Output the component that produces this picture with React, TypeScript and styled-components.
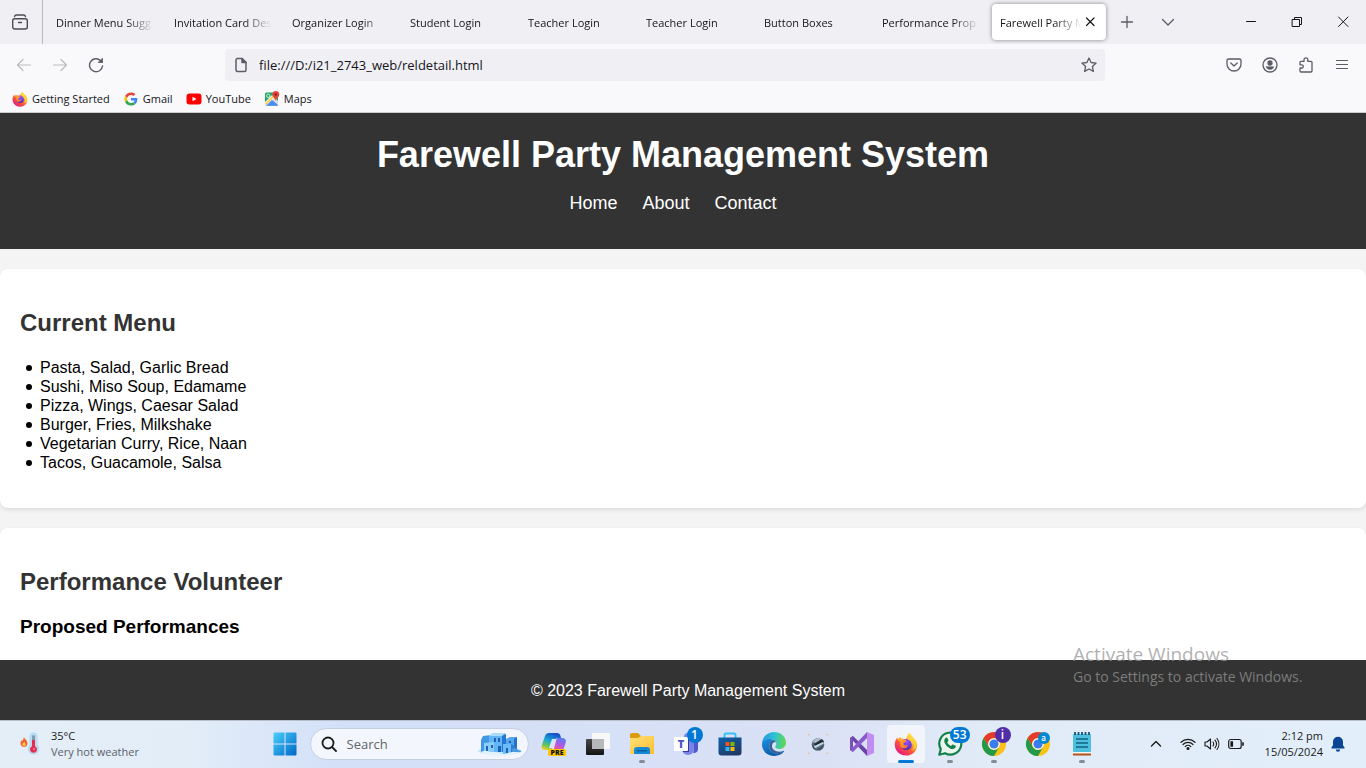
import React from "react";
import styled, { createGlobalStyle } from "styled-components";

const uiFont = `"Segoe UI", "Open Sans", "Noto Sans", sans-serif`;

const GlobalStyle = createGlobalStyle`
  *, *::before, *::after { box-sizing: border-box; }
  body { margin: 0; background: #f4f4f4; font-family: Arial, "Liberation Sans", sans-serif; }
  button, input { font: inherit; color: inherit; border: 0; padding: 0; margin: 0; background: none; }
  a { color: inherit; text-decoration: none; }
  svg { display: block; flex: none; }
`;

const Desktop = styled.div`
  position: relative;
  display: flex;
  flex-direction: column;
  height: 100vh;
  overflow: hidden;
`;

/* ---------- browser chrome ---------- */

const Chrome = styled.div`
  flex: none;
  background: #f9f9fb;
  border-bottom: 1px solid #cccccf;
  color: #15141a;
  font: 11px/16px ${uiFont};
`;

const TabStrip = styled.div`
  display: flex;
  align-items: center;
  height: 44px;
  background: #f0f0f4;
`;

const FirefoxView = styled.button`
  display: grid;
  place-items: center;
  flex: none;
  width: 43px;
  height: 44px;
  padding-right: 2px;
  border-right: 1px solid #b8b8bd;
  color: #4c4b54;
`;

const Tabs = styled.div`
  display: flex;
  flex: 0 1 auto;
  min-width: 0;
  padding: 0 1px 0 3px;
`;

const Tab = styled.button<{ $active?: boolean }>`
  display: flex;
  align-items: center;
  flex: 0 1 114px;
  width: 114px;
  min-width: 0;
  height: 36px;
  margin: 0 2px;
  padding: 0 8px;
  border-radius: 4px;
  text-align: left;
  background: ${(p) => (p.$active ? "#fff" : "transparent")};
  box-shadow: ${(p) => (p.$active ? "0 0 4px rgba(0, 0, 0, 0.45)" : "none")};
`;

const TabLabel = styled.span`
  flex: 1;
  min-width: 0;
  padding-top: 2px;
  overflow: hidden;
  white-space: nowrap;
  mask-image: linear-gradient(to left, transparent, #000 28px);
`;

const StripButton = styled.button`
  display: grid;
  place-items: center;
  flex: none;
  width: 36px;
  height: 36px;
  color: #5b5b66;

  & + & { margin-left: 5px; }
`;

const WindowControls = styled.div`
  display: flex;
  flex: none;
  margin-left: auto;
`;

const WindowButton = styled.button`
  display: grid;
  place-items: center;
  width: 46px;
  height: 44px;
  color: #15141a;
`;

const NavBar = styled.div`
  display: flex;
  align-items: center;
  height: 42px;
  padding: 0 6px;
`;

const NavButton = styled.button<{ $dim?: boolean }>`
  display: grid;
  place-items: center;
  flex: none;
  width: 36px;
  height: 32px;
  color: ${(p) => (p.$dim ? "#bbbbc0" : "#5b5b66")};
`;

const Spring = styled.div`
  flex: 9;
`;

const UrlBar = styled.label`
  display: flex;
  align-items: center;
  flex: 70;
  gap: 10px;
  height: 32px;
  padding: 0 8px;
  border-radius: 4px;
  background: #f0f0f4;
  color: #5b5b66;
`;

const UrlInput = styled.input`
  flex: 1;
  min-width: 0;
  color: #15141a;
  font-size: 13px;
  line-height: 18px;
  outline: none;
`;

const Bookmarks = styled.nav`
  display: flex;
  align-items: center;
  gap: 13px;
  height: 26px;
  padding: 0 12px;
`;

const Bookmark = styled.a`
  display: flex;
  align-items: center;
  gap: 4px;
`;

/* ---------- web page ---------- */

const Page = styled.div`
  display: flex;
  flex: 1;
  flex-direction: column;
  min-height: 0;
  background: #f4f4f4;
  color: #000;
  font-size: 16px;
  line-height: 19px;
`;

const PageHeader = styled.header`
  flex: none;
  padding: 21px 20px 36px;
  background: #333;
  color: #fff;
  text-align: center;
`;

const Title = styled.h1`
  margin: 0;
  font-size: 36px;
  line-height: 42px;
`;

const PageNav = styled.nav`
  display: flex;
  justify-content: center;
  gap: 25px;
  margin-top: 17px;
  padding-right: 20px;
  font-size: 18px;
  line-height: 20px;
`;

const Main = styled.main`
  flex: 1;
  min-height: 0;
  overflow: hidden;
`;

const Card = styled.section`
  margin: 20px 0;
  padding: 20px;
  border-radius: 8px;
  background: #fff;
  box-shadow: 0 2px 4px rgba(0, 0, 0, 0.1);
`;

const CardTitle = styled.h2`
  margin: 20px 0;
  color: #333;
  font-size: 24px;
  line-height: 28px;
`;

const CardSubtitle = styled.h3`
  margin: 20px 0;
  font-size: 19px;
  line-height: 22px;
`;

const MenuList = styled.ul`
  margin: 21px 0 16px;
  padding-left: 6px;
  list-style: none;
`;

const MenuItem = styled.li`
  display: flex;
  align-items: center;
  gap: 8px;

  &::before {
    content: "";
    width: 6px;
    height: 6px;
    border-radius: 50%;
    background: #000;
  }
`;

const PageFooter = styled.footer`
  flex: none;
  padding: 21px 10px 20px 20px;
  background: #333;
  color: #fff;
  text-align: center;
`;

const Watermark = styled.div`
  position: absolute;
  right: 57px;
  bottom: 81px;
  width: 236px;
  color: rgba(150, 150, 150, 0.75);
  font: 14px/20px ${uiFont};
  white-space: nowrap;
  pointer-events: none;
`;

const WatermarkTitle = styled.div`
  font-size: 19px;
  line-height: 26px;
`;

/* ---------- taskbar ---------- */

const Taskbar = styled.div`
  display: grid;
  grid-template-columns: 1fr auto 1fr;
  align-items: center;
  flex: none;
  height: 48px;
  padding-bottom: 1px;
  border-top: 1px solid #b9bfca;
  background: linear-gradient(90deg, #e3eef7 0%, #e2edf8 14%, #d3e0f8 25%, #d6e0f7 45%, #dae1f5 60%, #e0ebf7 72%, #e2eef9 100%);
  color: #1b1b1b;
  font: 11px/16px ${uiFont};
`;

const Weather = styled.button`
  display: flex;
  align-items: center;
  gap: 11px;
  padding-left: 20px;
  text-align: left;
`;

const Muted = styled.div`
  color: #5c6167;
`;

const TaskCenter = styled.div`
  display: flex;
  align-items: center;
`;

const AppButton = styled.button<{ $active?: boolean }>`
  position: relative;
  display: grid;
  place-items: center;
  width: 44px;
  height: 46px;

  &::before {
    content: "";
    position: absolute;
    z-index: 0;
    inset: 4px 3px;
    border-radius: 4px;
    background: ${(p) => (p.$active ? "rgba(255, 255, 255, 0.6)" : "transparent")};
  }

  svg { position: relative; }
`;

const RunMark = styled.span<{ $wide?: boolean }>`
  position: absolute;
  bottom: 4px;
  left: 50%;
  width: ${(p) => (p.$wide ? 16 : 6)}px;
  height: 3px;
  border-radius: 2px;
  background: ${(p) => (p.$wide ? "#0078d4" : "#868b94")};
  transform: translateX(-50%);
`;

const Badge = styled.span<{ $color?: string; $small?: boolean; $wide?: boolean }>`
  position: absolute;
  z-index: 1;
  top: ${(p) => (p.$small ? 11 : 6)}px;
  right: ${(p) => (p.$small ? 10 : p.$wide ? 2 : 5)}px;
  min-width: ${(p) => (p.$small ? 12 : 16)}px;
  height: ${(p) => (p.$small ? 12 : 16)}px;
  padding: 0 3px;
  border-radius: 8px;
  background: ${(p) => p.$color ?? "#0078d4"};
  color: #fff;
  font-size: ${(p) => (p.$small ? 8 : 12)}px;
  font-weight: 600;
  line-height: ${(p) => (p.$small ? 12 : 16)}px;
  text-align: center;
`;

const SearchBox = styled.label`
  display: flex;
  align-items: center;
  gap: 10px;
  width: 219px;
  height: 32px;
  margin: 0 3px;
  padding: 0 6px 0 10px;
  border: 1px solid #c3cfe3;
  border-radius: 16px;
  background: #f3f7fd;
`;

const SearchInput = styled.input`
  flex: 1;
  min-width: 0;
  font-size: 13px;
  line-height: 18px;
  outline: none;

  &::placeholder { color: #5f6368; opacity: 1; }
`;

const Tray = styled.div`
  display: flex;
  align-items: center;
  justify-content: flex-end;
  padding-right: 20px;
`;

const TrayButton = styled.button`
  display: grid;
  place-items: center;
  width: 24px;
  height: 40px;
`;

const TrayChevron = styled(TrayButton)`
  margin-right: 8px;
`;

const BellButton = styled(TrayButton)`
  width: 16px;
`;

const Clock = styled.button`
  margin: 0 7px 0 17px;
  text-align: right;
`;

/* ---------- icons ---------- */

const Line = ({ size = 16, w = 1.2, children }: { size?: number; w?: number; children: React.ReactNode }) => (
  <svg width={size} height={size} viewBox={`0 0 ${size} ${size}`} fill="none" stroke="currentColor" strokeWidth={w} strokeLinecap="round" strokeLinejoin="round">
    {children}
  </svg>
);

const FirefoxIcon = ({ size }: { size: number }) => (
  <svg width={size} height={size} viewBox="0 0 24 24">
    <defs>
      <linearGradient id={`ffa${size}`} x1="0.85" y1="0.05" x2="0.2" y2="0.95">
        <stop offset="0" stopColor="#fff44f" />
        <stop offset="0.35" stopColor="#ffb02a" />
        <stop offset="0.6" stopColor="#ff5a35" />
        <stop offset="1" stopColor="#e31587" />
      </linearGradient>
      <radialGradient id={`ffb${size}`} cx="0.55" cy="0.3" r="0.7">
        <stop offset="0" stopColor="#a04bff" />
        <stop offset="0.6" stopColor="#6b3be0" />
        <stop offset="1" stopColor="#4a2a9c" />
      </radialGradient>
      <linearGradient id={`ffc${size}`} x1="0" y1="0" x2="1" y2="1">
        <stop offset="0" stopColor="#ffbd2e" />
        <stop offset="1" stopColor="#ff6a2c" />
      </linearGradient>
    </defs>
    <path d="M16 .6c.3 2 1.600 3.300 3 4.600 2.300 2.100 4.100 4.400 4.100 8C23.100 19 18.300 23.600 12.200 23.600 5.800 23.600.8 18.900.8 12.800c0-3 .9-5.300 2.500-7.300.1.800.3 1.400.6 1.900.7-1 1.600-1.800 2.700-2.300-.1.800 0 1.400.3 1.900 2-.5 3.400-.2 4.900.6C12.700 4.700 13.600 2 16 .6z" fill={`url(#ffa${size})`} />
    <circle cx="12.300" cy="12.500" r="5.600" fill={`url(#ffb${size})`} />
    <path d="M3.300 8c2-1.600 4.500-2 6.600-.6.900.6 1.900.8 3 .9-.2 1.500-1.500 2-2.900 2.300-.6.200-.6.900-.4 1.500.6 1.600 2.900 1.600 4.300.6-.4 2.700-2.600 4.200-5 3.500C5.800 15.200 5.500 11.300 7 9.700 5.600 8.900 4.400 9 3.300 8z" fill={`url(#ffc${size})`} />
    <path d="M13.500 7.500c2.600.6 4.500 2.600 4.300 5.400 1.100-1 1.400-2.500 1-4 1.800 3 1.500 7.500-1.500 9.800 5-1.200 6.400-6.500 4.200-10.500-1-1.900-3.600-3-5.500-5.200-.9 1.500-1.300 3.300-2.500 4.500z" fill="#ffd53a" opacity=".85" />
  </svg>
);

const GoogleIcon = () => (
  <svg width="16" height="16" viewBox="-5 -5 58 58">
    <path fill="#ea4335" d="M24 9.500c3.500 0 6.700 1.200 9.200 3.600l6.900-6.900C35.900 2.400 30.500 0 24 0 14.600 0 6.500 5.400 2.600 13.200l8 6.200C12.400 13.700 17.700 9.500 24 9.500z" />
    <path fill="#4285f4" d="M47 24.600c0-1.600-.2-3.100-.4-4.600H24v9h12.900c-.6 3-2.200 5.500-4.700 7.200l7.700 6C44.400 38 47 31.800 47 24.600z" />
    <path fill="#fbbc05" d="M10.500 28.600c-.5-1.500-.8-3-.8-4.600s.3-3.100.8-4.600l-8-6.200C.9 16.500 0 20.100 0 24s.9 7.500 2.600 10.800l7.900-6.200z" />
    <path fill="#34a853" d="M24 48c6.500 0 11.900-2.100 15.900-5.800l-7.700-6c-2.200 1.500-4.900 2.300-8.200 2.300-6.300 0-11.600-4.200-13.500-9.900l-8 6.200C6.500 42.600 14.600 48 24 48z" />
  </svg>
);

const YouTubeIcon = () => (
  <svg width="16" height="16" viewBox="0 0 16 16">
    <rect x=".5" y="2.500" width="15" height="11" rx="3" fill="#f00" />
    <path d="M6.500 5.700v4.600L10.500 8z" fill="#fff" />
  </svg>
);

const MapsIcon = () => (
  <svg width="16" height="16" viewBox="0 0 16 16">
    <rect x="1" y="1.500" width="13" height="13" rx="1.500" fill="#1fa463" />
    <path d="M1.500 14.500 8 8l6.500 6.500z" fill="#4a8af4" />
    <path d="M1 14V11l7-7 3 3-8.500 7.500z" fill="#f1f1f1" />
    <path d="M2.500 14.500 8 9l5.500 5.500z" fill="#4a8af4" />
    <path d="m8 9 3-3 3 4v4z" fill="#d9dbdf" />
    <path d="M1 12.500 9.500 4l1.300 1.300L2 14.200z" fill="#fbd14b" />
    <circle cx="4.200" cy="4.800" r="1.700" fill="none" stroke="#fff" strokeWidth=".8" />
    <path d="M11.800 0a3.500 3.500 0 0 0-3.500 3.500c0 2.500 2.900 3.400 3.500 6.500.6-3.100 3.500-4 3.500-6.500A3.500 3.500 0 0 0 11.800 0z" fill="#e5453a" />
    <circle cx="11.800" cy="3.500" r="1.200" fill="#8c1f1b" />
  </svg>
);

const WeatherIcon = () => (
  <svg width="20" height="24" viewBox="0 0 20 24">
    <path d="M4 5c.4 2 3.500 3.300 3.500 6.200C7.500 13.500 6 15 4 15S.500 13.500.500 11.300c0-1.500.7-2.500 1.500-3.300l.6 1C3.200 8 3.500 6.500 4 5z" fill="#f0622d" />
    <path d="M4.200 9.500c.3 1 1.500 1.600 1.500 3 0 1-.7 1.800-1.700 1.800s-1.700-.8-1.700-1.800c0-1.400 1.500-1.700 1.900-3z" fill="#ffc04d" />
    <path d="M9.500 4.500a4 4 0 0 1 8 0v8.300a5.700 5.700 0 1 1-8 0z" fill="#b9dcf2" />
    <path d="M12 4.500a1.500 1.500 0 0 1 3 0v10h-3z" fill="#7f9bb3" />
    <path d="M12 8h3v6.200a3.500 3.500 0 1 1-3 0z" fill="#e52e4d" />
    <circle cx="14" cy="17" r=".9" fill="#ff9db0" />
  </svg>
);

const WindowsIcon = () => (
  <svg width="24" height="24" viewBox="0 0 24 24">
    <defs>
      <linearGradient id="win" x1="0" y1="0" x2="1" y2="1">
        <stop offset="0" stopColor="#49d0fb" />
        <stop offset="1" stopColor="#0067c6" />
      </linearGradient>
    </defs>
    <path d="M1.500.5h10v11H.5v-10a1 1 0 0 1 1-1zM12.500.5h10a1 1 0 0 1 1 1v10h-11zM.5 12.500h11v11h-10a1 1 0 0 1-1-1zM12.500 12.500h11v10a1 1 0 0 1-1 1h-10z" fill="url(#win)" />
  </svg>
);

const VillageIcon = () => (
  <svg width="44" height="24" viewBox="0 0 44 24">
    <ellipse cx="22" cy="19" rx="22" ry="4" fill="#c5e3f7" />
    <path d="M3 8l2-4 8-1v17H3z" fill="#3f97e6" />
    <path d="M11 4l4-3h12v19H11z" fill="#64b5f5" />
    <path d="M11 4l4-3h12l-3 3z" fill="#a9dcfd" />
    <path d="M24 4l4-2v18h-4z" fill="#2677cf" />
    <path d="M28 7l4-2h7v14H28z" fill="#55a8f0" />
    <path d="M36 7l3-2v14h-3z" fill="#2372c9" />
    <path d="M6 11l10-1v10l-10-1z" fill="#8bcdfb" />
    <path d="M25 12h8v10h-8z" fill="#6cbcf8" />
    <path d="M33 12l4 2v7l-4 1z" fill="#2b7cd3" />
    <path d="M8 14h2v5H8zM13 13h2v3h-2zM16 6h2v4h-2zM20 6h2v4h-2zM20 14h3v6h-3zM28 16h2v5h-2zM31 9h2v2h-2z" fill="#1e61b4" />
    <path d="M3 20c5-3 8 0 12 0s6 2 10 2 8-3 15-2c-4 3-10 4-18 4S7 23 3 20z" fill="#e3f3fc" />
    <path d="M34 17c2-2 5-1 6 1 2 0 3 1 3 2h-9z" fill="#4b99df" />
  </svg>
);

const CopilotIcon = () => (
  <svg width="26" height="26" viewBox="0 0 26 26">
    <defs>
      <linearGradient id="cpa" x1="0.6" y1="0" x2="0.2" y2="1">
        <stop offset="0" stopColor="#1550c8" />
        <stop offset="0.45" stopColor="#18a7d6" />
        <stop offset="0.75" stopColor="#64c45a" />
        <stop offset="1" stopColor="#f5cf27" />
      </linearGradient>
      <linearGradient id="cpb" x1="0.7" y1="0" x2="0.3" y2="1">
        <stop offset="0" stopColor="#5b7cf0" />
        <stop offset="0.4" stopColor="#b05be3" />
        <stop offset="0.75" stopColor="#f0588e" />
        <stop offset="1" stopColor="#ff9a4a" />
      </linearGradient>
    </defs>
    <path d="M8 2h8c2 0 3 1 3.500 3L20 7h-3c-2 0-2.800 1-3.300 2.500L11.500 16c-.6 2-1.500 3-3.500 3H4c-3 0-4-2-3.300-4.500L4 5c.7-2 2-3 4-3z" fill="url(#cpa)" />
    <path d="M17 7h4c3 0 4.500 2 3.700 4.500L22 20c-.7 2-2 3-4 3H9c2 0 2.800-1 3.300-2.800L15 10c.4-1.800.5-3 2-3z" fill="url(#cpb)" />
    <path d="M8 17l3-9h4l-3 9z" fill="#dbe4f8" />
    <rect x="7" y="18" width="18" height="7" rx="1.500" fill="#ffc800" />
    <text x="16" y="24" textAnchor="middle" fontFamily="Open Sans, sans-serif" fontSize="7" fontWeight="800" fill="#111">PRE</text>
  </svg>
);

const TaskViewIcon = () => (
  <svg width="26" height="26" viewBox="0 0 26 26">
    <defs>
      <linearGradient id="tv" x1="0" y1="0" x2="0" y2="1">
        <stop offset="0" stopColor="#4a4a4a" />
        <stop offset="1" stopColor="#141414" />
      </linearGradient>
    </defs>
    <rect x="1" y="8" width="18" height="16" rx="1" fill="url(#tv)" />
    <rect x="7" y="2" width="18" height="16" rx="1" fill="#f8f8f8" />
    <path d="M7 8h12v10H8a1 1 0 0 1-1-1z" fill="#b7b8ba" />
  </svg>
);

const FolderIcon = () => (
  <svg width="26" height="26" viewBox="0 0 26 26">
    <defs>
      <linearGradient id="fo" x1="0" y1="0" x2="1" y2="1">
        <stop offset="0" stopColor="#ffe07c" />
        <stop offset="1" stopColor="#fbbf2c" />
      </linearGradient>
    </defs>
    <path d="M1 3.500A1.500 1.500 0 0 1 2.500 2H9l3 3h12a1 1 0 0 1 1 1v6H1z" fill="#dd9c0e" />
    <path d="M1 7h8l3-2h12a1 1 0 0 1 1 1v17H1z" fill="url(#fo)" />
    <path d="M5 23v-4a3 3 0 0 1 3-3h10a3 3 0 0 1 3 3v4z" fill="#1689d2" />
    <path d="M8 19h10v1.500H8z" fill="#0b60a6" />
  </svg>
);

const TeamsIcon = () => (
  <svg width="26" height="26" viewBox="0 0 26 26">
    <circle cx="15" cy="6" r="4" fill="#7b83eb" />
    <path d="M9 9h12v9a6 6 0 0 1-12 0z" fill="#7b83eb" />
    <path d="M19 10h6v8c0 3-2.500 4.500-5 4a9 9 0 0 0 1-4v-8z" fill="#5059c9" />
    <path d="M10 8h6v13h-6z" fill="#353c99" />
    <rect x="1" y="6" width="14" height="14" rx="1" fill="#fff" />
    <text x="8" y="17" textAnchor="middle" fontFamily="Open Sans, sans-serif" fontSize="11" fontWeight="800" fill="#4b53bc">T</text>
  </svg>
);

const StoreIcon = () => (
  <svg width="26" height="26" viewBox="0 0 26 26">
    <defs>
      <linearGradient id="st" x1="0" y1="0" x2="0.6" y2="1">
        <stop offset="0" stopColor="#0a63b0" />
        <stop offset="1" stopColor="#223a66" />
      </linearGradient>
    </defs>
    <path d="M7.500 7V4A1.500 1.500 0 0 1 9 2.500h8A1.500 1.500 0 0 1 18.500 4v3" fill="none" stroke="#37c1f0" strokeWidth="2" />
    <path d="M1.500 6.500h23v15a3 3 0 0 1-3 3h-17a3 3 0 0 1-3-3z" fill="url(#st)" />
    <path d="M8.500 11H12.500v4H8.500z" fill="#f25022" />
    <path d="M13.500 11H17.500v4H13.500z" fill="#7fba00" />
    <path d="M8.500 16H12.500v4H8.500z" fill="#35b6f2" />
    <path d="M13.500 16H17.500v4H13.500z" fill="#ffb900" />
  </svg>
);

const EdgeIcon = () => (
  <svg width="26" height="26" viewBox="0 0 26 26">
    <defs>
      <linearGradient id="ea" x1="0" y1="0.3" x2="1" y2="0.4">
        <stop offset="0" stopColor="#2196dd" />
        <stop offset="0.5" stopColor="#2fc1d9" />
        <stop offset="1" stopColor="#62d84e" />
      </linearGradient>
      <linearGradient id="eb" x1="0" y1="0" x2="0.5" y2="1">
        <stop offset="0" stopColor="#1c8fe0" />
        <stop offset="1" stopColor="#0b5aa8" />
      </linearGradient>
    </defs>
    <path d="M1 12.500C1.400 6 6.500 1 13 1c7 0 12 5 12 10.500 0 4-3 6.500-6.500 6.500-3 0-4.300-1.200-4.300-2.200 0-.8 1-1.100 1-2.800 0-2.600-2.600-5-6.200-5C4.500 8 1.800 10 1 12.500z" fill="url(#ea)" />
    <path d="M1 13c0-3 3.200-5 7.500-5 1.500 0 3 .4 4 1-3 1-4.500 3.500-4.300 6.500.3 4.500 4.500 7.500 9 6.800 2-.3 3.800-1.200 5-2.300.5-.4 1 .1.700.6C20.800 23.500 17.200 25 13.300 25 6 25 1 20 1 13z" fill="url(#eb)" />
    <path d="M12.500 9c-3 1-4.500 3.500-4.300 6.500.3 4.500 4.500 7.500 9 6.800 2-.3 3.800-1.200 5-2.300-5 2-11.500-.2-11.200-5.500.1-2.500 1.500-3.500 3.800-3.500-.5-1-1.300-1.600-2.300-2z" fill="#123f7c" opacity=".8" />
  </svg>
);

const GlobeIcon = () => (
  <svg width="24" height="24" viewBox="0 0 24 24">
    <circle cx="12" cy="12.500" r="6.300" fill="#596a79" />
    <path d="M6.500 10c2-3.500 6-4.800 9.500-3l-6 4z" fill="#aebfcb" />
    <path d="M8 12l8-5 2 2.500-8.500 4z" fill="#232b33" />
    <path d="M7.500 14.500l9.500-4.500.8 1.500-9 5z" fill="#bcd5ea" />
    <path d="M6 12l2 3 2 2.500-2.500-1z" fill="#2c3640" />
    <path d="M10.500 17.500l7.200-3.700c-1 3-4 4.600-7.200 3.700z" fill="#3a4855" />
    <path d="M2.500 3.500v-1h1M20.500 2.500h1v1M21.500 20.500v1h-1M3.500 21.500h-1v-1" fill="none" stroke="#e8c07a" strokeWidth="1.200" />
  </svg>
);

const VisualStudioIcon = () => (
  <svg width="26" height="26" viewBox="0 0 26 26">
    <path d="M1 7l3-2 15 15-1 5z" fill="#6a43a6" />
    <path d="M1 7l3-2v16l-3-2z" fill="#7b4fb5" />
    <path d="M1 19l3 2L19 6l-1-5z" fill="#8a5cc9" />
    <path d="M18 1l7 3v18l-7 3z" fill="#c18df0" />
    <path d="M4 10v6l3-3z" fill="#d8e0f6" />
    <path d="M18 8.500v9L12.500 13z" fill="#d8e0f6" />
  </svg>
);

const WhatsAppIcon = () => (
  <svg width="26" height="26" viewBox="0 0 26 26">
    <path d="M2.300 23.700l1.500-5.600A11 11 0 1 1 8 22.200z" fill="#e9f5ee" stroke="#138049" strokeWidth="2.200" strokeLinejoin="round" />
    <path d="M8.500 7c.7-.7 1.600-.6 2 .2l.8 1.900c.2.500.1.900-.3 1.300l-.8.9c.8 1.700 2 2.900 3.800 3.700l1-1c.3-.4.7-.5 1.200-.3l2 .9c.7.400.8 1.200.2 2-1.200 1.500-2.900 1.900-5 1.100a11 11 0 0 1-5.700-5.800C7 10 7.200 8.300 8.500 7z" fill="#138049" />
  </svg>
);

const ChromeIcon = () => (
  <svg width="26" height="26" viewBox="0 0 26 26">
    <circle cx="13" cy="13" r="12" fill="#fbc116" />
    <path d="M2.600 7A12 12 0 0 1 23.400 7H13a6 6 0 0 0-5.200 9z" fill="#e33b2e" />
    <path d="M2.600 7A12 12 0 0 0 13 25l5.200-9a6 6 0 0 1-10.400 0z" fill="#229a4c" />
    <circle cx="13" cy="13" r="5.800" fill="#fff" />
    <circle cx="13" cy="13" r="4.600" fill="#3b7ded" />
  </svg>
);

const NotepadIcon = () => (
  <svg width="22" height="26" viewBox="0 0 22 26">
    <path d="M2 22h18v2.500H2z" fill="#b35415" />
    <path d="M2 21h18v1.500H2z" fill="#f4f4f4" />
    <rect x="2" y="3" width="18" height="18" rx="1" fill="#4cc0de" />
    <path d="M4 1v3M7.500 1v3M11 1v3M14.500 1v3M18 1v3" stroke="#14557a" strokeWidth="1.800" />
    <path d="M5 8h12M5 12h12M5 16h12" stroke="#12617f" strokeWidth="1.300" />
  </svg>
);

/* ---------- content ---------- */

const tabs = ["Dinner Menu Sugg", "Invitation Card Des", "Organizer Login", "Student Login", "Teacher Login", "Teacher Login", "Button Boxes", "Performance Prop"];

const bookmarks = [
  { name: "Getting Started", icon: <FirefoxIcon size={16} /> },
  { name: "Gmail", icon: <GoogleIcon /> },
  { name: "YouTube", icon: <YouTubeIcon /> },
  { name: "Maps", icon: <MapsIcon /> },
];

const menu = [
  "Pasta, Salad, Garlic Bread",
  "Sushi, Miso Soup, Edamame",
  "Pizza, Wings, Caesar Salad",
  "Burger, Fries, Milkshake",
  "Vegetarian Curry, Rice, Naan",
  "Tacos, Guacamole, Salsa",
];

type TaskbarApp = { name: string; icon: React.ReactNode; running?: boolean; active?: boolean; badge?: string; badgeColor?: string; smallBadge?: boolean };

const apps: TaskbarApp[] = [
  { name: "Copilot", icon: <CopilotIcon /> },
  { name: "Task view", icon: <TaskViewIcon /> },
  { name: "File Explorer", icon: <FolderIcon />, running: true },
  { name: "Teams", icon: <TeamsIcon />, badge: "1" },
  { name: "Store", icon: <StoreIcon /> },
  { name: "Edge", icon: <EdgeIcon /> },
  { name: "Globe", icon: <GlobeIcon /> },
  { name: "Visual Studio", icon: <VisualStudioIcon /> },
  { name: "Firefox", icon: <FirefoxIcon size={24} />, active: true },
  { name: "WhatsApp", icon: <WhatsAppIcon />, running: true, badge: "53" },
  { name: "Chrome", icon: <ChromeIcon />, running: true, badge: "i", badgeColor: "#512da8" },
  { name: "Chrome, second profile", icon: <ChromeIcon />, badge: "a", badgeColor: "#0288d1", smallBadge: true },
  { name: "Notepad", icon: <NotepadIcon />, running: true },
];

export default function App() {
  return (
    <>
      <GlobalStyle />
      <Desktop>
        <Chrome>
          <TabStrip>
            <FirefoxView aria-label="Firefox View">
              <Line w={1.4}>
                <rect x=".7" y="4.700" width="14.600" height="10.300" rx="2" />
                <path d="M2.500 2.500C2.800 1.400 3.500 1 4.500 1h7c1 0 1.700.4 2 1.500M6.500 8.500h3" />
              </Line>
            </FirefoxView>
            <Tabs>
              {tabs.map((t, i) => (
                <Tab key={i}><TabLabel>{t}</TabLabel></Tab>
              ))}
              <Tab $active>
                <TabLabel>Farewell Party M</TabLabel>
                <Line><path d="M4.500 4l7.500 7.500M12 4l-7.500 7.500" /></Line>
              </Tab>
            </Tabs>
            <StripButton aria-label="New tab"><Line w={1.3}><path d="M8 2.500v11M2.500 8h11" /></Line></StripButton>
            <StripButton aria-label="List all tabs"><Line w={1.3}><path d="M2.500 5.500L8 11l5.500-5.500" /></Line></StripButton>
            <WindowControls>
              <WindowButton aria-label="Minimize"><Line w={1}><path d="M3.500 7.500h9" /></Line></WindowButton>
              <WindowButton aria-label="Restore">
                <Line w={1}><path d="M3.500 5.500h7v7h-7zM5.500 5.500v-2h7v7h-2" /></Line>
              </WindowButton>
              <WindowButton aria-label="Close"><Line w={1}><path d="M3.500 3l9.500 9.500M13 3l-9.500 9.500" /></Line></WindowButton>
            </WindowControls>
          </TabStrip>
          <NavBar>
            <NavButton $dim aria-label="Back"><Line><path d="M1.500 8h13M7 2.500L1.500 8 7 13.500" /></Line></NavButton>
            <NavButton $dim aria-label="Forward"><Line><path d="M1.500 8h13M9 2.500L14.500 8 9 13.500" /></Line></NavButton>
            <NavButton aria-label="Reload">
              <Line w={1.4}>
                <path d="M14.500 9A6.500 6.500 0 1 1 12.500 3.500L14 5" />
                <path d="M14.500 1.500v4h-4z" fill="currentColor" strokeWidth=".8" />
              </Line>
            </NavButton>
            <Spring />
            <UrlBar>
              <Line w={1.5}>
                <path d="M4 1.500h5l4 4v7.500a1.500 1.500 0 0 1-1.500 1.500h-7A1.500 1.500 0 0 1 3 13V3a1.500 1.500 0 0 1 1.500-1.500" />
                <path d="M9 1.500V5.500h4z" fill="currentColor" />
              </Line>
              <UrlInput aria-label="Address" defaultValue="file:///D:/i21_2743_web/reldetail.html" />
              <Line w={1.3}>
                <path d="M8 1l2.100 4.500 5 .6-3.700 3.400 1 4.900L8 12l-4.400 2.400 1-4.900L.9 6.100l5-.6z" />
              </Line>
            </UrlBar>
            <Spring />
            <NavButton aria-label="Save to Pocket">
              <Line w={1.3}><path d="M2.500 2h11a1.500 1.500 0 0 1 1.500 1.500V7A7 7 0 0 1 1 7V3.500A1.500 1.500 0 0 1 2.500 2zM4.800 6L8 9l3.200-3" /></Line>
            </NavButton>
            <NavButton aria-label="Account">
              <Line w={1.3}>
                <circle cx="8" cy="8" r="7" />
                <circle cx="8" cy="6" r="2" fill="currentColor" />
                <path d="M4.300 9.700h7.400C11.500 11.500 10 12.500 8 12.500s-3.500-1-3.700-2.800z" fill="currentColor" strokeWidth=".5" />
              </Line>
            </NavButton>
            <NavButton aria-label="Extensions">
              <Line w={1.3}>
                <path d="M6 4.300V2.800a1.900 1.900 0 0 1 3.800 0v1.500H13a1 1 0 0 1 1 1V14a1 1 0 0 1-1 1H3a1 1 0 0 1-1-1v-3h1.700a1.500 1.500 0 0 0 0-3.200H2V5.300a1 1 0 0 1 1-1z" />
              </Line>
            </NavButton>
            <NavButton aria-label="Menu"><Line w={1.2}><path d="M2.500 3.500h11M2.500 7.500h11M2.500 11.500h11" /></Line></NavButton>
          </NavBar>
          <Bookmarks aria-label="Bookmarks">
            {bookmarks.map((b) => (
              <Bookmark href="#" key={b.name}>{b.icon}{b.name}</Bookmark>
            ))}
          </Bookmarks>
        </Chrome>

        <Page>
          <PageHeader>
            <Title>Farewell Party Management System</Title>
            <PageNav>
              <a href="#">Home</a>
              <a href="#">About</a>
              <a href="#">Contact</a>
            </PageNav>
          </PageHeader>
          <Main>
            <Card>
              <CardTitle>Current Menu</CardTitle>
              <MenuList>
                {menu.map((m) => <MenuItem key={m}>{m}</MenuItem>)}
              </MenuList>
            </Card>
            <Card>
              <CardTitle>Performance Volunteer</CardTitle>
              <CardSubtitle>Proposed Performances</CardSubtitle>
            </Card>
          </Main>
          <PageFooter>© 2023 Farewell Party Management System</PageFooter>
        </Page>

        <Taskbar>
          <Weather>
            <WeatherIcon />
            <div>
              <div>35°C</div>
              <Muted>Very hot weather</Muted>
            </div>
          </Weather>
          <TaskCenter>
            <AppButton aria-label="Start"><WindowsIcon /></AppButton>
            <SearchBox>
              <Line w={1.8}><circle cx="7" cy="7" r="5.500" /><path d="M11 11l4 4" /></Line>
              <SearchInput placeholder="Search" aria-label="Search" />
              <VillageIcon />
            </SearchBox>
            {apps.map((a) => (
              <AppButton key={a.name} aria-label={a.name} $active={a.active}>
                {a.icon}
                {a.badge && <Badge $color={a.badgeColor} $small={a.smallBadge} $wide={a.badge.length > 1}>{a.badge}</Badge>}
                {(a.running || a.active) && <RunMark $wide={a.active} />}
              </AppButton>
            ))}
          </TaskCenter>
          <Tray>
            <TrayChevron aria-label="Hidden icons"><Line w={1.4}><path d="M3.500 10L8 5.500l4.500 4.500" /></Line></TrayChevron>
            <TrayButton aria-label="Wi-Fi">
              <Line w={1.2}>
                <path d="M1 6.300a10 10 0 0 1 14 0M3 8.500a7 7 0 0 1 10 0M5.200 10.600a4 4 0 0 1 5.600 0" />
                <circle cx="8" cy="12.500" r="1" fill="currentColor" />
              </Line>
            </TrayButton>
            <TrayButton aria-label="Volume">
              <Line w={1.1}>
                <path d="M1 6v4h2l3.500 3V3L3 6zM9 6a3.500 3.500 0 0 1 0 4M11 4.200a6 6 0 0 1 0 7.600M13 2.500a9 9 0 0 1 0 11" />
              </Line>
            </TrayButton>
            <TrayButton aria-label="Battery">
              <Line w={1.2}>
                <rect x=".7" y="3.500" width="12.500" height="9" rx="2" />
                <path d="M3 5.800h1.500v4.400H3z" fill="currentColor" />
                <path d="M15 6.800v2.400" strokeWidth="1.600" />
              </Line>
            </TrayButton>
            <Clock>
              <div>2:12 pm</div>
              <div>15/05/2024</div>
            </Clock>
            <BellButton aria-label="Notifications">
              <svg width="16" height="16" viewBox="0 0 16 16" fill="#0a4694">
                <path d="M8 .8a5 5 0 0 1 5 5v3.500l1.500 2.200c.3.500 0 1-.5 1H2c-.5 0-.8-.5-.5-1L3 9.300V5.800a5 5 0 0 1 5-5zM5.800 13.500h4.400a2.200 2.200 0 0 1-4.400 0z" />
              </svg>
            </BellButton>
          </Tray>
        </Taskbar>

        <Watermark>
          <WatermarkTitle>Activate Windows</WatermarkTitle>
          Go to Settings to activate Windows.
        </Watermark>
      </Desktop>
    </>
  );
}
